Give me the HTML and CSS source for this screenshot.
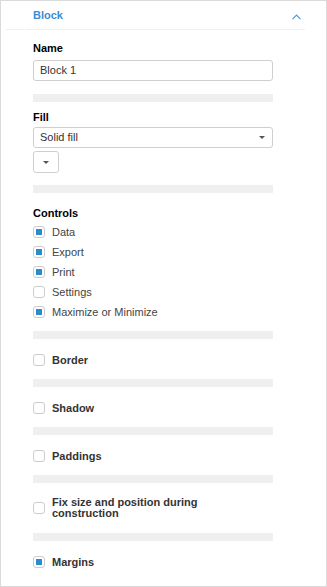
FILE: index.html
```html
<!DOCTYPE html>
<html>
<head>
<meta charset="utf-8">
<link rel="stylesheet" href="styles.css">
</head>
<body>
<div class="panel">
  <div class="header">
    <div class="hd-left"></div>
    <div class="hd-main">
      <span class="hd-title">Block</span>
      <svg class="chev" width="9" height="6" viewBox="0 0 9 6"><path d="M0.5 5.2 L4.5 1.2 L8.5 5.2" fill="none" stroke="#4a9be0" stroke-width="1.2"/></svg>
    </div>
  </div>
  <div class="body">
    <div class="label name-label">Name</div>
    <div class="input">Block 1</div>
    <div class="bar bar-1"></div>
    <div class="label fill-label">Fill</div>
    <div class="select"><span>Solid fill</span><span class="tri"></span></div>
    <div class="btn"><span class="tri"></span></div>
    <div class="bar bar-2"></div>
    <div class="label controls-label">Controls</div>
    <div class="row"><span class="cb on"></span><span class="txt">Data</span></div>
    <div class="row"><span class="cb on"></span><span class="txt">Export</span></div>
    <div class="row"><span class="cb on"></span><span class="txt">Print</span></div>
    <div class="row"><span class="cb"></span><span class="txt">Settings</span></div>
    <div class="row"><span class="cb on"></span><span class="txt">Maximize or Minimize</span></div>
    <div class="bar bar-3"></div>
    <div class="row opt"><span class="cb"></span><span class="txt b">Border</span></div>
    <div class="bar"></div>
    <div class="row opt"><span class="cb"></span><span class="txt b">Shadow</span></div>
    <div class="bar"></div>
    <div class="row opt"><span class="cb"></span><span class="txt b">Paddings</span></div>
    <div class="bar"></div>
    <div class="row opt fix"><span class="cb"></span><span class="txt b">Fix size and position during<br>construction</span></div>
    <div class="bar bar-fix"></div>
    <div class="row opt"><span class="cb on"></span><span class="txt b">Margins</span></div>
  </div>
</div>
</body>
</html>
```
FILE: styles.css
```css
html, body {
  margin: 0;
  padding: 0;
  background: #fff;
}
body {
  font-family: "Liberation Sans", Arial, sans-serif;
  font-size: 11px;
  color: #333;
}
.panel {
  box-sizing: border-box;
  width: 327px;
  height: 587px;
  border: 1px solid #dadada;
  overflow: hidden;
}
.header {
  display: flex;
  height: 29px;
  margin: 0 21px 0 5px;
}
.hd-left {
  width: 18px;
  border-bottom: 1px solid #f0f0f0;
}
.hd-main {
  flex: 1;
  margin-left: 1px;
  border-bottom: 1px solid #f0f0f0;
  display: flex;
  align-items: center;
  justify-content: space-between;
  padding: 0 4px 0 8px;
}
.hd-title {
  color: #3a8ed2;
  font-weight: bold;
  font-size: 11px;
  line-height: 13px;
  padding-top: 1px;
}
.chev {
  display: block;
  margin-top: 3px;
}
.body {
  padding: 12px 0 0 32px;
  width: 240px;
}
.label {
  font-weight: bold;
  color: #000;
  line-height: 13px;
  height: 13px;
}
.name-label { margin-bottom: 5px; }
.fill-label { margin-top: 9px; margin-bottom: 3px; }
.controls-label { margin-top: 14px; margin-bottom: 2px; }
.input, .select {
  box-sizing: border-box;
  height: 21px;
  border: 1px solid #cfcfcf;
  border-radius: 3px;
  padding: 0 6px;
  line-height: 19px;
  color: #333;
}
.select {
  display: flex;
  align-items: center;
  justify-content: space-between;
  padding-right: 7px;
}
.tri {
  display: block;
  width: 0;
  height: 0;
  border-left: 3px solid transparent;
  border-right: 3px solid transparent;
  border-top: 3px solid #555;
}
.btn {
  box-sizing: border-box;
  margin-top: 3px;
  width: 26px;
  height: 22px;
  border: 1px solid #cfcfcf;
  border-radius: 3px;
  display: flex;
  align-items: center;
  justify-content: center;
}
.bar {
  height: 8px;
  background: #efefef;
  margin-top: 9px;
}
.bar-1 { margin-top: 13px; }
.bar-2 { margin-top: 12px; }
.bar-3 { margin-top: 9px; }
.bar-fix { margin-top: 14px; }
.row {
  display: flex;
  align-items: center;
  height: 20px;
}
.row.opt { margin-top: 11px; }
.row.fix {
  height: 22px;
  margin-top: 14px;
}
.cb {
  box-sizing: border-box;
  flex: none;
  width: 12px;
  height: 12px;
  border: 1px solid #cccccc;
  border-radius: 3px;
  background: #fff;
  display: flex;
  align-items: center;
  justify-content: center;
  margin-right: 7px;
}
.cb.on::after {
  content: "";
  display: block;
  width: 6px;
  height: 6px;
  background: #2a8ccf;
}
.txt {
  color: #444;
  line-height: 13px;
}
.txt.b {
  font-weight: bold;
  color: #333;
}
.fix .txt {
  line-height: 11px;
}
```
